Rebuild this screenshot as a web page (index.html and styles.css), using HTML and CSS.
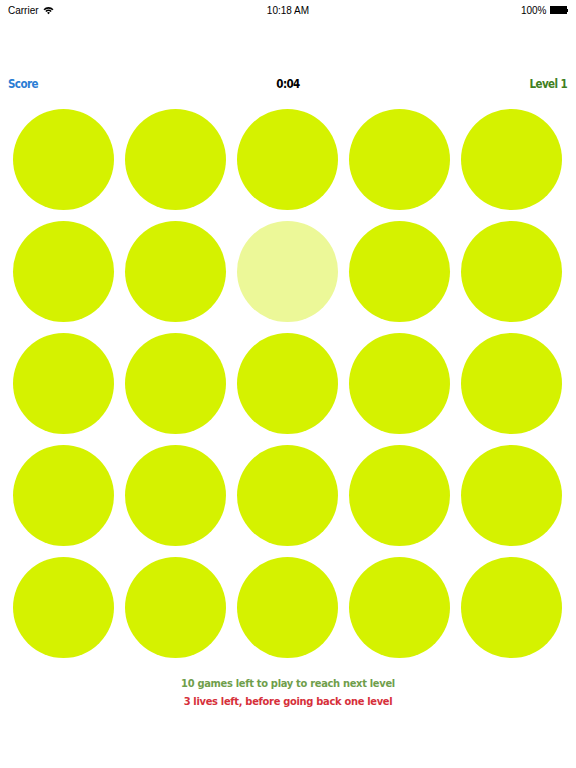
FILE: index.html
```html
<!DOCTYPE html>
<html>
<head>
<meta charset="utf-8">
<link rel="stylesheet" href="styles.css">
</head>
<body>
<div class="status">
  <div class="status-left">Carrier
    <svg class="wifi" width="11" height="9" viewBox="0 0 11 9">
      <path d="M0.5 3.2 A7 7 0 0 1 10.5 3.2 L9.4 4.3 A5.4 5.4 0 0 0 1.6 4.3 Z" fill="#000"/>
      <path d="M2.3 5 A4.4 4.4 0 0 1 8.7 5 L7.6 6.1 A2.8 2.8 0 0 0 3.4 6.1 Z" fill="#000"/>
      <path d="M4.1 6.8 A2 2 0 0 1 6.9 6.8 L5.5 8.3 Z" fill="#000"/>
    </svg>
  </div>
  <div class="status-center">10:18 AM</div>
  <div class="status-right">100% <span class="battery"><span class="battery-fill"></span></span><span class="battery-tip"></span></div>
</div>
<div class="header">
  <span class="score">Score</span>
  <span class="timer">0:04</span>
  <span class="level">Level 1</span>
</div>
<div class="grid">
  <div class="dot"></div><div class="dot"></div><div class="dot"></div><div class="dot"></div><div class="dot"></div>
  <div class="dot"></div><div class="dot"></div><div class="dot lit"></div><div class="dot"></div><div class="dot"></div>
  <div class="dot"></div><div class="dot"></div><div class="dot"></div><div class="dot"></div><div class="dot"></div>
  <div class="dot"></div><div class="dot"></div><div class="dot"></div><div class="dot"></div><div class="dot"></div>
  <div class="dot"></div><div class="dot"></div><div class="dot"></div><div class="dot"></div><div class="dot"></div>
</div>
<div class="info">
  <div class="games">10 games left to play to reach next level</div>
  <div class="lives">3 lives left, before going back one level</div>
</div>
</body>
</html>
```
FILE: styles.css
```css
html, body {
  margin: 0;
  padding: 0;
  background: #fff;
}
body {
  width: 576px;
  height: 768px;
  overflow: hidden;
  font-family: "DejaVu Sans Condensed", "DejaVu Sans", sans-serif;
}
.status {
  height: 20px;
  display: flex;
  align-items: center;
  justify-content: space-between;
  padding: 0 8px 0 8px;
  font-family: "Liberation Sans", Arial, sans-serif;
  font-size: 10px;
  color: #000;
  position: relative;
}
.status-left {
  display: flex;
  align-items: center;
  gap: 4px;
}
.status-center {
  position: absolute;
  left: 0;
  right: 0;
  text-align: center;
  pointer-events: none;
}
.status-right {
  display: flex;
  align-items: center;
}
.battery {
  display: inline-block;
  width: 15px;
  height: 6px;
  border: 1px solid #000;
  margin-left: 3px;
  padding: 0;
  background: #000;
}
.battery-tip {
  display: inline-block;
  width: 1.5px;
  height: 3px;
  background: #000;
}
.header {
  margin-top: 56px;
  height: 16px;
  line-height: 16px;
  display: flex;
  justify-content: space-between;
  padding: 0 9px 0 8px;
  font-weight: bold;
  font-size: 11.5px;
  letter-spacing: -0.6px;
  position: relative;
}
.score { color: #2a7dd4; }
.level { color: #3f7f22; }
.timer {
  position: absolute;
  left: 0;
  right: 0;
  text-align: center;
  color: #000;
}
.grid {
  margin-top: 17px;
  padding-left: 13px;
  display: grid;
  grid-template-columns: repeat(5, 101px);
  grid-auto-rows: 101px;
  column-gap: 11px;
  row-gap: 11px;
}
.dot {
  border-radius: 50%;
  background: #d5f200;
}
.dot.lit {
  background: #ecf898;
}
.info {
  margin-top: 17px;
  text-align: center;
  font-weight: bold;
  font-size: 11px;
  letter-spacing: -0.3px;
  line-height: 18px;
}
.games { color: #6f9e4b; }
.lives { color: #d6303a; }
```
